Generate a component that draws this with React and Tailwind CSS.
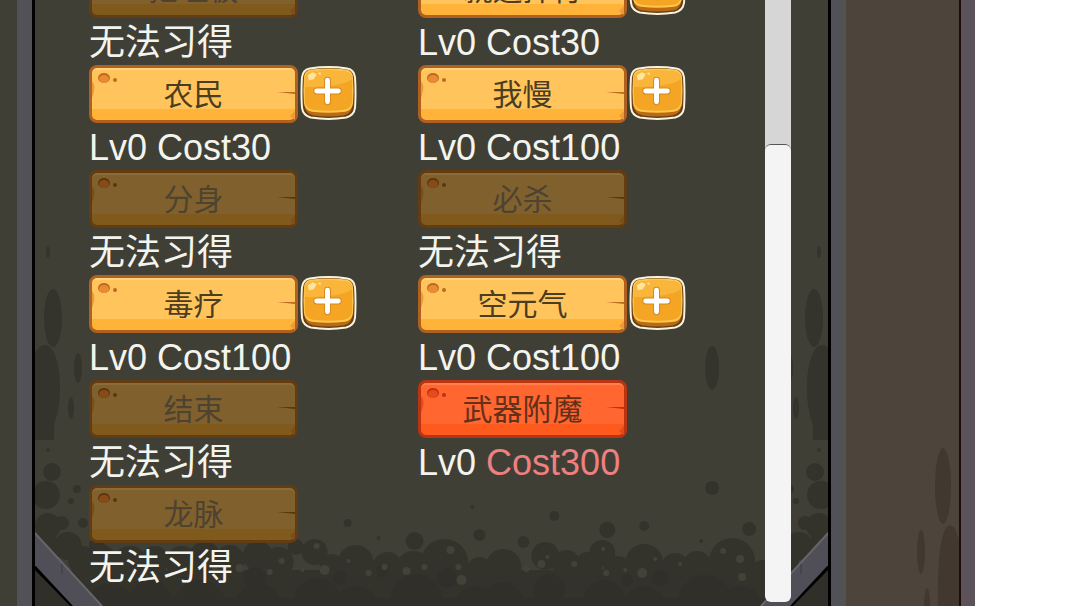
import clsx from "clsx";

const skills = [
  { id: 1, name: "挖埋板", state: "locked" },
  { id: 2, name: "就选择行", state: "open", cost: 30 },
  { id: 3, name: "农民", state: "open", cost: 30 },
  { id: 4, name: "我慢", state: "open", cost: 100 },
  { id: 5, name: "分身", state: "locked" },
  { id: 6, name: "必杀", state: "locked" },
  { id: 7, name: "毒疗", state: "open", cost: 100 },
  { id: 8, name: "空元气", state: "open", cost: 100 },
  { id: 9, name: "结束", state: "locked" },
  { id: 10, name: "武器附魔", state: "expensive", cost: 300 },
  { id: 11, name: "龙脉", state: "locked" },
];

const plankStyles = {
  open: "border-[#b0601f] bg-linear-to-b from-[#ffc45c] from-78% to-[#ffb338] to-78% text-[#4b3d20] inset-shadow-[0_2px_0_#ffd27c]",
  locked:
    "border-[#643c12] bg-linear-to-b from-[#80612e] from-78% to-[#80591c] to-78% text-[#4d4330] inset-shadow-[0_2px_0_#8a6c3c]",
  expensive:
    "border-[#b93410] bg-linear-to-b from-[#ff6630] from-78% to-[#ff5a1e] to-78% text-[#63301a] inset-shadow-[0_2px_0_#ff7e4c]",
};

const holeColors = {
  open: { rim: "#bd6a20", fill: "#e98b35", edge: "#eb9a3c" },
  locked: { rim: "#5f350f", fill: "#874b18", edge: "#7a4d1c" },
  expensive: { rim: "#b93410", fill: "#e84a1c", edge: "#e04a1c" },
};

// x, y, radius
const puddle = [
  [258, 556, 15], [279, 562, 15], [296, 547, 8], [315, 552, 13], [332, 566, 12],
  [356, 563, 18], [388, 567, 15], [415, 541, 9], [414, 569, 18], [445, 563, 24],
  [480, 570, 13], [504, 567, 18], [546, 556, 14], [567, 564, 14], [603, 553, 13],
  [589, 566, 14], [618, 570, 14], [645, 563, 19], [676, 567, 14], [698, 565, 14],
  [733, 561, 23], [764, 574, 14], [230, 560, 15], [205, 556, 15], [182, 562, 16],
  [155, 560, 14], [130, 564, 18], [100, 560, 16], [97, 545, 8],
];

const drops = [
  [348, 523, 4], [379, 538, 2], [473, 507, 2], [480, 535, 6], [524, 542, 6],
  [555, 516, 5], [608, 530, 8], [645, 526, 5], [702, 541, 2], [713, 488, 7],
  [750, 529, 7],
];

const mounds = [
  [255, 578, 11], [258, 608, 24], [318, 602, 24], [356, 610, 24], [417, 600, 26],
  [340, 578, 7], [383, 571, 6], [448, 578, 10], [475, 604, 18], [503, 604, 22],
  [550, 590, 16], [605, 602, 22], [645, 608, 22], [661, 578, 8], [628, 580, 6],
  [706, 602, 27], [742, 608, 22], [200, 606, 26], [150, 602, 22], [110, 608, 24],
];

const bubbles = [
  [317, 546, 3], [282, 561, 3], [270, 572, 3], [325, 570, 5], [303, 570, 2],
  [349, 561, 2], [369, 573, 3], [385, 567, 3], [407, 571, 4], [425, 567, 3],
  [451, 550, 4], [459, 567, 3], [462, 580, 5], [548, 557, 2], [542, 564, 4],
  [527, 569, 3], [575, 564, 3], [604, 549, 2], [607, 573, 3], [643, 573, 5],
  [656, 559, 2], [681, 564, 2], [626, 570, 2], [724, 551, 3], [741, 559, 4],
  [743, 577, 4], [240, 568, 4], [205, 561, 2],
];

const sideBlobs = [
  [52, 472, 9], [77, 489, 4], [71, 501, 3], [46, 495, 14], [62, 523, 7],
  [83, 523, 5], [48, 526, 13], [68, 546, 14], [82, 560, 14], [40, 550, 20],
  [48, 450, 2],
];

const Circles = ({ items, fill }) => (
  <g fill={fill}>
    {items.map(([x, y, r]) => (
      <circle key={`${x}-${y}`} cx={x} cy={y} r={r} />
    ))}
  </g>
);

const CornerStrut = () => (
  <>
    <path d="M35 566 L75 606 L35 606Z" fill="#302f29" />
    <path d="M33 565 L73 606" stroke="#000" strokeWidth="4" />
    <path d="M33 531 L35 532 L103 606 L73 606 L33 563Z" fill="#504e56" />
    <path d="M33 531 L102 606" stroke="#66656a" strokeWidth="2" />
    <path d="M62 564 V574" stroke="#3c3b40" />
  </>
);

const SideStains = () => (
  <g fill="#34342c">
    <ellipse cx="48" cy="252" rx="2" ry="6" />
    <ellipse cx="53" cy="318" rx="9" ry="29" />
    <path d="M35 353 C42 341 50 343 55 355 C62 374 62 403 54 425 V440 H35Z" />
    <ellipse cx="78" cy="368" rx="4" ry="15" />
    <ellipse cx="71" cy="408" rx="3" ry="11" />
  </g>
);

const Backdrop = () => (
  <svg
    viewBox="35 0 794 606"
    preserveAspectRatio="none"
    className="absolute inset-0 -z-10 h-full w-full"
    aria-hidden="true"
  >
    <rect x="35" width="794" height="606" fill="#403f36" />
    <SideStains />
    <g transform="translate(868 0) scale(-1 1)">
      <SideStains />
      <Circles items={sideBlobs} fill="#34332b" />
    </g>
    <ellipse cx="713" cy="368" rx="7" ry="22" fill="#34342c" />
    <rect x="35" y="570" width="794" height="36" fill="#34332b" />
    <Circles items={sideBlobs} fill="#34332b" />
    <Circles items={puddle} fill="#34332b" />
    <Circles items={drops} fill="#34332b" />
    <Circles items={mounds} fill="#302f29" />
    <rect x="35" y="598" width="794" height="8" fill="#302f29" />
    <Circles items={bubbles} fill="#434239" />
    <CornerStrut />
    <g transform="translate(864 0) scale(-1 1)">
      <CornerStrut />
    </g>
  </svg>
);

const Plank = ({ name, state }) => {
  const c = holeColors[state];
  return (
    <button
      type="button"
      disabled={state === "locked"}
      className={clsx(
        "relative h-[58px] w-[209px] rounded-lg border-3 pt-0.5 text-center text-3xl leading-[50px]",
        plankStyles[state]
      )}
    >
      <svg
        viewBox="0 0 203 52"
        className="absolute inset-0 h-full w-full"
        aria-hidden="true"
      >
        <ellipse cx="12" cy="10" rx="6" ry="5" fill={c.rim} />
        <ellipse cx="12" cy="11" rx="5" ry="4" fill={c.fill} />
        <circle cx="23" cy="12" r="2" fill={c.rim} />
        <path d="M0 13 C3 17 3 20 1 27 L0 30Z" fill={c.edge} />
        <path d="M185 24 L203 24 V26 L194 25Z" fill={c.rim} />
        <path d="M203 43 L198 48 L203 52Z" fill={c.edge} />
      </svg>
      {name}
    </button>
  );
};

const PlusButton = ({ name }) => (
  <button type="button" aria-label={`学习${name}`} className="h-[56px] w-[57px]">
    <svg viewBox="0 0 58 56" className="h-full w-full">
      <path
        d="M10 3 Q29 0 48 3 Q55 4 56 12 Q57 28 56 43 Q55 51 47 53 Q29 56 11 53 Q3 51 2 43 Q1 28 2 12 Q3 4 10 3Z"
        fill="#60401b"
        stroke="#fdf3dc"
        strokeWidth="2"
      />
      <path d="M4 38 Q5 50 14 51 Q29 53 44 51 Q53 50 54 38Z" fill="#b96a12" />
      <path
        d="M11 4 Q29 2 47 4 Q54 5 54 13 Q55 26 54 38 Q53 46 46 47 Q29 49 12 47 Q5 46 4 38 Q3 26 4 13 Q4 5 11 4Z"
        fill="#ffc54c"
      />
      <path
        d="M12 6 Q29 4 46 6 Q53 7 53 14 V37 Q52 44 45 45 Q29 47 13 45 Q6 44 5 37 V14 Q5 7 12 6Z"
        fill="#f4a524"
      />
      <path
        d="M12 6 Q29 4 46 6 Q53 7 53 14 Q42 22 5 22 V14 Q5 7 12 6Z"
        fill="#fab63a"
      />
      <path d="M8 10 L13 7 L17 9 L14 14 L9 15Z M18 8 L21 7 L21 10Z" fill="#ffe5a0" />
      <path
        d="M28 15 V37 M17 26 H39"
        stroke="#d68a1d"
        strokeWidth="7"
        strokeLinecap="round"
      />
      <path
        d="M28 15 V37 M17 26 H39"
        stroke="#fff"
        strokeWidth="5"
        strokeLinecap="round"
      />
    </svg>
  </button>
);

const Skill = ({ skill }) => {
  const { name, state, cost } = skill;
  return (
    <li>
      <div className="flex items-start gap-0.5">
        <Plank name={name} state={state} />
        {state === "open" && <PlusButton name={name} />}
      </div>
      <p className="h-[47px] text-4xl leading-[49px] whitespace-nowrap text-[#f4f4ee]">
        {state === "locked" ? (
          "无法习得"
        ) : (
          <>
            Lv0{" "}
            <span className={clsx(state === "expensive" && "text-[#ee8080]")}>
              Cost{cost}
            </span>
          </>
        )}
      </p>
    </li>
  );
};

const App = () => {
  return (
    <div className="flex h-screen overflow-hidden bg-white font-['Liberation_Sans','Noto_Sans_CJK_SC',sans-serif]">
      <div className="w-[17px] shrink-0 bg-[#403f36]" />
      <div className="w-[15px] shrink-0 bg-[#515157]" />

      <main className="relative isolate flex min-w-0 flex-1 border-x-3 border-black">
        <Backdrop />
        <ul className="-mt-10 grid flex-1 auto-rows-[105px] grid-cols-[329px_329px] pl-[54px]">
          {skills.map((s) => (
            <Skill key={s.id} skill={s} />
          ))}
        </ul>
        <div
          role="scrollbar"
          aria-orientation="vertical"
          aria-valuenow={100}
          className="mr-[37px] mb-1 flex w-[26px] flex-col bg-linear-to-b from-[#d6d6d6] from-50% to-transparent to-50%"
        >
          <div className="mt-auto h-[76%] rounded-md border-t border-[#555] bg-[#f4f4f4]" />
        </div>
      </main>

      <div className="w-[15px] shrink-0 border-r-4 border-[#52534f] bg-[#515158]" />
      <aside className="w-[115px] shrink-0 border-r-2 border-[#1d0c0c] bg-[#4d453b]">
        <svg
          viewBox="846 0 113 606"
          preserveAspectRatio="none"
          className="h-full w-full"
          aria-hidden="true"
        >
          <g fill="#43382f">
            <ellipse cx="943" cy="486" rx="8" ry="38" />
            <path d="M938 606 C937 560 941 530 948 526 C954 523 957 532 959 540 V606Z" />
            <ellipse cx="921" cy="552" rx="4" ry="22" />
            <ellipse cx="927" cy="606" rx="3" ry="18" />
          </g>
        </svg>
      </aside>
      <div className="w-[14px] shrink-0 bg-[#5c5259]" />
      <div className="w-[105px] shrink-0" />
    </div>
  );
};

export default App;
